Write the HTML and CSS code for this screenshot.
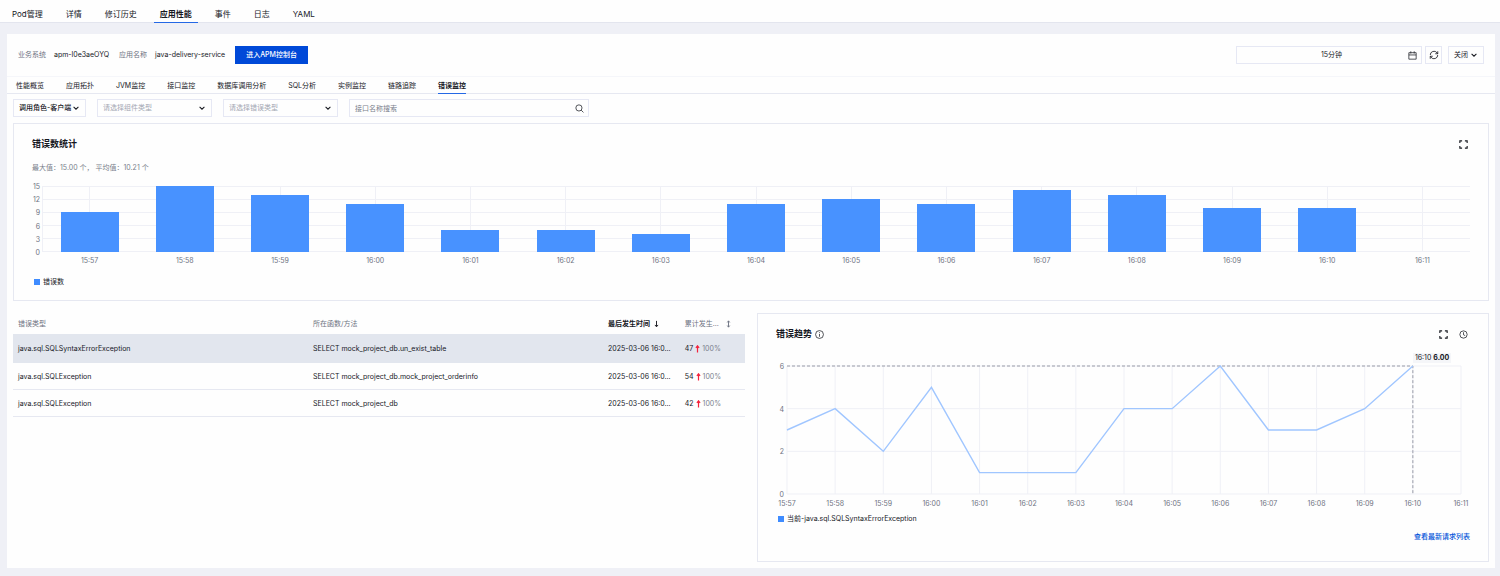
FILE: index.html
```html
<!DOCTYPE html>
<html lang="zh-CN">

<head>
    <meta charset="UTF-8">
    <meta name="viewport" content="width=device-width, initial-scale=1">
    <title>应用性能</title>
    <link rel="stylesheet" href="styles.css">
</head>

<body>
    <!-- Page tabs -->
    <nav class="page-tabs">
        <a href="#pod">Pod管理</a>
        <a href="#detail">详情</a>
        <a href="#history">修订历史</a>
        <a href="#apm" class="active">应用性能</a>
        <a href="#events">事件</a>
        <a href="#logs">日志</a>
        <a href="#yaml">YAML</a>
    </nav>

    <main class="panel">
        <!-- Service info and time range -->
        <div class="service-bar">
            <dl class="service-info">
                <dt>业务系统</dt>
                <dd>apm-l0e3aeOYQ</dd>
                <dt>应用名称</dt>
                <dd>java-delivery-service</dd>
            </dl>
            <button class="primary-button">进入APM控制台</button>
            <div class="time-tools">
                <button class="time-range">
                    <span>15分钟</span>
                    <svg class="icon" viewBox="0 0 16 16"><path d="M1.500 3h13v11.500h-13zM1.500 7h13M5 .5v4M11 .5v4" /></svg>
                </button>
                <button class="refresh" aria-label="刷新">
                    <svg class="icon" viewBox="0 0 16 16"><path d="M2 8a6 6 0 0 1 10.8-3.6L14 6M14 2v4h-4M14 8a6 6 0 0 1-10.8 3.6L2 10M2 14v-4h4" /></svg>
                </button>
                <div class="select auto-refresh">
                    <select aria-label="自动刷新"><option>关闭</option></select>
                    <svg class="chevron" viewBox="0 0 10 10"><path d="M1 3l4 4 4-4" /></svg>
                </div>
            </div>
        </div>

        <nav class="sub-tabs">
            <a href="#overview">性能概览</a>
            <a href="#topology">应用拓扑</a>
            <a href="#jvm">JVM监控</a>
            <a href="#api">接口监控</a>
            <a href="#db">数据库调用分析</a>
            <a href="#sql">SQL分析</a>
            <a href="#instance">实例监控</a>
            <a href="#trace">链路追踪</a>
            <a href="#error" class="active">错误监控</a>
        </nav>

        <div class="content">
            <!-- Filters -->
            <form class="filters">
                <div class="select role">
                    <select aria-label="调用角色"><option>调用角色-客户端</option></select>
                    <svg class="chevron" viewBox="0 0 10 10"><path d="M1 3l4 4 4-4" /></svg>
                </div>
                <div class="select empty">
                    <select aria-label="组件类型"><option>请选择组件类型</option></select>
                    <svg class="chevron" viewBox="0 0 10 10"><path d="M1 3l4 4 4-4" /></svg>
                </div>
                <div class="select empty">
                    <select aria-label="错误类型"><option>请选择错误类型</option></select>
                    <svg class="chevron" viewBox="0 0 10 10"><path d="M1 3l4 4 4-4" /></svg>
                </div>
                <div class="search">
                    <input type="text" aria-label="接口名称搜索" placeholder="接口名称搜索">
                    <button type="button" aria-label="搜索">
                        <svg class="icon" viewBox="0 0 16 16"><circle cx="7" cy="7" r="5.5" /><path d="M11 11l4 4" /></svg>
                    </button>
                </div>
            </form>

            <!-- Error count -->
            <section class="card count-card">
                <header class="card-header">
                    <h2>错误数统计</h2>
                    <div class="card-actions">
                        <button aria-label="全屏"><svg class="icon bold" viewBox="0 0 16 16"><path d="M1.5 5.5v-4h4M10.5 1.5h4v4M14.5 10.5v4h-4M5.5 14.5h-4v-4" /></svg></button>
                    </div>
                </header>
                <p class="summary">最大值：15.00 个， 平均值：10.21 个</p>
                <div class="chart">
                    <ul class="y-axis">
                        <li>15</li>
                        <li>12</li>
                        <li>9</li>
                        <li>6</li>
                        <li>3</li>
                        <li>0</li>
                    </ul>
                    <div class="bars">
                        <div class="col"><div class="bar" style="height: 60%"></div></div>
                        <div class="col"><div class="bar" style="height: 100%"></div></div>
                        <div class="col"><div class="bar" style="height: 86.67%"></div></div>
                        <div class="col"><div class="bar" style="height: 73.33%"></div></div>
                        <div class="col"><div class="bar" style="height: 33.33%"></div></div>
                        <div class="col"><div class="bar" style="height: 33.33%"></div></div>
                        <div class="col"><div class="bar" style="height: 26.67%"></div></div>
                        <div class="col"><div class="bar" style="height: 73.33%"></div></div>
                        <div class="col"><div class="bar" style="height: 80%"></div></div>
                        <div class="col"><div class="bar" style="height: 73.33%"></div></div>
                        <div class="col"><div class="bar" style="height: 93.33%"></div></div>
                        <div class="col"><div class="bar" style="height: 86.67%"></div></div>
                        <div class="col"><div class="bar" style="height: 66.67%"></div></div>
                        <div class="col"><div class="bar" style="height: 66.67%"></div></div>
                        <div class="col"></div>
                    </div>
                    <ul class="x-axis">
                        <li>15:57</li>
                        <li>15:58</li>
                        <li>15:59</li>
                        <li>16:00</li>
                        <li>16:01</li>
                        <li>16:02</li>
                        <li>16:03</li>
                        <li>16:04</li>
                        <li>16:05</li>
                        <li>16:06</li>
                        <li>16:07</li>
                        <li>16:08</li>
                        <li>16:09</li>
                        <li>16:10</li>
                        <li>16:11</li>
                    </ul>
                </div>
                <div class="legend"><i></i>错误数</div>
            </section>

            <div class="split">
                <!-- Error list -->
                <table class="errors">
                    <thead>
                        <tr>
                            <th class="wide">错误类型</th>
                            <th class="wide">所在函数/方法</th>
                            <th class="time"><button class="sort active">最后发生时间 <svg class="sort-icon" viewBox="0 0 8 12"><path d="M4 1v9M1.5 7.5L4 10.5l2.500-3" /></svg></button></th>
                            <th><button class="sort total">累计发生... <svg class="sort-icon" viewBox="0 0 8 12"><path d="M4 1v10M2 3.500L4 1l2 2.500M2 8.500L4 11l2-2.500" /></svg></button></th>
                        </tr>
                    </thead>
                    <tbody>
                        <tr class="selected">
                            <td>java.sql.SQLSyntaxErrorException</td>
                            <td>SELECT mock_project_db.un_exist_table</td>
                            <td>2025-03-06 16:0...</td>
                            <td>47 <svg class="up" viewBox="0 0 6 10"><path d="M3 9.500V2M1 3.500l2-2.500 2 2.500" /></svg> <span class="rate">100%</span></td>
                        </tr>
                        <tr>
                            <td>java.sql.SQLException</td>
                            <td>SELECT mock_project_db.mock_project_orderinfo</td>
                            <td>2025-03-06 16:0...</td>
                            <td>54 <svg class="up" viewBox="0 0 6 10"><path d="M3 9.500V2M1 3.500l2-2.500 2 2.500" /></svg> <span class="rate">100%</span></td>
                        </tr>
                        <tr>
                            <td>java.sql.SQLException</td>
                            <td>SELECT mock_project_db</td>
                            <td>2025-03-06 16:0...</td>
                            <td>42 <svg class="up" viewBox="0 0 6 10"><path d="M3 9.500V2M1 3.500l2-2.500 2 2.500" /></svg> <span class="rate">100%</span></td>
                        </tr>
                    </tbody>
                </table>

                <!-- Error trend -->
                <section class="card trend-card">
                    <header class="card-header">
                        <h2>错误趋势</h2>
                        <svg class="icon info" viewBox="0 0 16 16"><circle cx="8" cy="8" r="7" /><path d="M8 7v5M8 4v1.500" /></svg>
                        <div class="card-actions">
                            <button aria-label="全屏"><svg class="icon bold" viewBox="0 0 16 16"><path d="M1.5 5.5v-4h4M10.5 1.5h4v4M14.5 10.5v4h-4M5.5 14.5h-4v-4" /></svg></button>
                            <button aria-label="历史"><svg class="icon" viewBox="0 0 16 16"><circle cx="8" cy="8" r="6.500" /><path d="M8 4v4.500l3 1.500" /></svg></button>
                        </div>
                    </header>
                    <div class="chart">
                        <ul class="y-axis">
                            <li>6</li>
                            <li>4</li>
                            <li>2</li>
                            <li>0</li>
                        </ul>
                        <div class="plot">
                            <svg class="lines" viewBox="0 0 14 6" preserveAspectRatio="none">
                                <path class="grid" d="M0 0H14M0 2H14M0 4H14M0 6H14M0 0V6M1 0V6M2 0V6M3 0V6M4 0V6M5 0V6M6 0V6M7 0V6M8 0V6M9 0V6M10 0V6M11 0V6M12 0V6M13 0V6M14 0V6" />
                                <path class="cursor" d="M0 0H13V6" />
                                <polyline class="series" points="0,3 1,2 2,4 3,1 4,5 5,5 6,5 7,2 8,2 9,0 10,3 11,3 12,2 13,0" />
                            </svg>
                            <div class="tooltip">16:10 <b>6.00</b></div>
                        </div>
                        <ul class="x-axis">
                            <li>15:57</li>
                            <li>15:58</li>
                            <li>15:59</li>
                            <li>16:00</li>
                            <li>16:01</li>
                            <li>16:02</li>
                            <li>16:03</li>
                            <li>16:04</li>
                            <li>16:05</li>
                            <li>16:06</li>
                            <li>16:07</li>
                            <li>16:08</li>
                            <li>16:09</li>
                            <li>16:10</li>
                            <li>16:11</li>
                        </ul>
                    </div>
                    <div class="legend"><i></i>当前-java.sql.SQLSyntaxErrorException</div>
                    <a class="more" href="#requests">查看最新请求列表</a>
                </section>
            </div>
        </div>
    </main>
</body>

</html>
```

FILE: styles.css
```css
* {
    box-sizing: border-box;
}

body {
    margin: 0;
    min-height: 100vh;
    background-color: #eff0f6;
    color: #16181f;
    font-family: Inter, "Noto Sans CJK SC", sans-serif;
    font-size: 7px;
    line-height: 10px;
}

a {
    color: inherit;
    text-decoration: none;
}

ul,
dl,
dd,
p,
h2 {
    margin: 0;
    padding: 0;
    list-style: none;
}

button,
input,
select {
    margin: 0;
    padding: 0;
    border: none;
    border-radius: 0;
    background: none;
    color: inherit;
    font: inherit;
    outline: none;
}

button {
    cursor: pointer;
}

svg {
    display: block;
    fill: none;
    stroke: currentColor;
}

.icon {
    width: 9px;
    height: 9px;
    stroke-width: 1.3;
}

.icon.bold {
    stroke-width: 2;
}

/* page tabs */
.page-tabs {
    display: flex;
    gap: 11px;
    height: 23px;
    padding: 0 6px;
    background-color: #fefefe;
    border-bottom: 1px solid #e3e5ee;
    font-size: 8px;
    line-height: 12px;
}

.page-tabs a {
    height: 23px;
    padding: 8px 6px 0;
}

.page-tabs .active {
    border-bottom: 1px solid #2468e5;
    font-weight: 600;
}

.panel {
    margin: 11px 5px 8px 7px;
    background-color: #fefefe;
}

/* service bar */
.service-bar {
    display: flex;
    align-items: center;
    height: 43px;
    padding: 0 11px;
    border-bottom: 1px solid #f5f6fa;
}

.service-info {
    display: flex;
}

.service-info dt {
    margin-right: 8px;
    color: #6e7382;
}

.service-info dd {
    margin-right: 10px;
}

.primary-button {
    height: 18px;
    padding: 0 11px;
    background-color: #0049d8;
    color: #fff;
    font-weight: 500;
}

.time-tools {
    display: flex;
    gap: 3px;
    margin-left: auto;
}

.time-range,
.refresh,
.select,
.search {
    height: 18px;
    border: 1px solid #e6e8f4;
}

.time-range {
    display: flex;
    align-items: center;
    width: 186px;
    padding: 0 4px 0 18px;
}

.time-range span {
    flex: 1;
}

.refresh {
    display: flex;
    align-items: center;
    justify-content: center;
    width: 17px;
}

.refresh .icon {
    width: 10px;
    height: 10px;
}

.auto-refresh {
    width: 36px;
    margin-left: 3px;
}

.select {
    display: grid;
    align-items: center;
}

.select select,
.select .chevron {
    grid-area: 1 / 1;
}

.select select {
    appearance: none;
    width: 100%;
    height: 16px;
    padding: 0 5px;
}

.chevron {
    justify-self: end;
    width: 6px;
    height: 6px;
    margin-right: 6px;
    stroke-width: 1.7;
    pointer-events: none;
}

/* sub tabs */
.sub-tabs {
    display: flex;
    gap: 22px;
    height: 17px;
    padding: 0 9px;
    border-bottom: 1px solid #e6e8f1;
}

.sub-tabs a {
    height: 17px;
    padding-top: 4px;
}

.sub-tabs .active {
    border-bottom: 1px solid #2468e5;
    font-weight: 600;
}

.content {
    padding: 5px 6px 6px;
}

/* filters */
.filters {
    display: flex;
    gap: 11px;
    margin-bottom: 6px;
}

.filters .select {
    width: 115px;
}

.filters .role {
    width: 73px;
    font-weight: 500;
}

.filters .empty select {
    color: #a3a7b3;
}

.search {
    display: flex;
    align-items: center;
    width: 240px;
    padding: 0 4px 0 5px;
}

.search input {
    flex: 1;
    min-width: 0;
    height: 16px;
}

.search input::placeholder {
    color: #7a7f8c;
    opacity: 1;
}

/* cards */
.card {
    padding: 14px 18px 13px;
    border: 1px solid #e6e8f1;
}

.card-header {
    display: flex;
    align-items: center;
    height: 12px;
}

.card-header h2 {
    font-size: 9px;
    line-height: 12px;
    font-weight: 700;
}

.card-header .info {
    margin-left: 3px;
}

.card-actions {
    display: flex;
    gap: 11px;
    margin-left: auto;
    padding-right: 2px;
}

.summary {
    margin: 13px 0;
    color: #7a7f8c;
}

/* charts */
.chart {
    display: grid;
    grid-template-columns: 8px 1fr;
    column-gap: 3px;
    color: #6e7382;
}

.y-axis {
    display: flex;
    flex-direction: column;
    justify-content: space-between;
    text-align: right;
}

.y-axis li {
    height: 0;
    line-height: 1px;
}

.x-axis {
    grid-column: 2;
    display: flex;
    text-align: center;
}

.count-card .chart {
    column-gap: 2px;
}

.bars {
    display: flex;
    height: 66px;
    background: repeating-linear-gradient(to bottom, #eff0f6 0 1px, transparent 1px 13px);
    box-shadow: inset 1px 0 #eff0f6;
}

.col {
    flex: 1;
    display: flex;
    align-items: flex-end;
    justify-content: center;
    background: linear-gradient(#eff0f6, #eff0f6) center / 1px 100% no-repeat;
}

.bar {
    width: 61%;
    background-color: #4892ff;
}

.count-card .x-axis {
    margin-top: 4px;
}

.count-card .x-axis li {
    flex: 1;
}

.legend {
    display: flex;
    align-items: center;
    gap: 3px;
    padding-left: 2px;
}

.legend i {
    width: 6px;
    height: 6px;
    background-color: #3f8cff;
}

.count-card .legend {
    margin-top: 11px;
}

.split {
    display: grid;
    grid-template-columns: 1fr 1fr;
    align-items: start;
    gap: 12px;
    margin-top: 12px;
}

/* error list */
.errors {
    width: 100%;
    table-layout: fixed;
    border-collapse: collapse;
}

.errors th,
.errors td {
    padding: 0 0 0 5px;
    text-align: left;
    white-space: nowrap;
}

.errors th {
    height: 21px;
    color: #6e7382;
    font-weight: 400;
}

.errors .wide {
    width: 40.3%;
}

.errors .time {
    width: 10.5%;
}

.errors td {
    height: 27px;
    padding-top: 2px;
    border-bottom: 1px solid #e6e8f1;
}

.errors .selected td {
    height: 28px;
    background-color: #e2e6ee;
    border-color: #e2e6ee;
}

.sort {
    display: flex;
    align-items: center;
    gap: 4px;
}

.sort.active {
    color: #16181f;
    font-weight: 600;
}

.sort.total {
    gap: 7px;
}

.sort-icon {
    width: 5px;
    height: 8px;
    stroke-width: 1.5;
}

.up {
    display: inline-block;
    width: 5px;
    height: 8px;
    color: #f5223c;
    stroke-width: 1.5;
    vertical-align: middle;
}

.rate {
    color: #7a7f8c;
}

/* error trend */
.trend-card {
    padding-bottom: 19px;
}

.trend-card .chart {
    margin-top: 26px;
    padding-right: 9px;
}

.plot {
    position: relative;
    height: 128px;
}

.lines {
    width: 100%;
    height: 100%;
    overflow: visible;
}

.lines path,
.lines polyline {
    vector-effect: non-scaling-stroke;
}

.grid {
    stroke: #eff0f6;
}

.cursor {
    stroke: #9a9ca8;
    stroke-dasharray: 3 2;
}

.series {
    stroke: #a0c6ff;
    stroke-width: 1.4;
}

.tooltip {
    position: absolute;
    bottom: 100%;
    left: 92.86%;
    margin-bottom: 3px;
    padding: 0 2px;
    background-color: #f5f6f9;
    color: #16181f;
    white-space: nowrap;
}

.trend-card .x-axis {
    justify-content: space-between;
    margin-top: 5px;
}

.trend-card .x-axis li {
    display: flex;
    justify-content: center;
    width: 0;
}

.trend-card .legend {
    margin-top: 5px;
}

.more {
    display: block;
    width: fit-content;
    margin: 8px 0 0 auto;
    color: #0052d9;
    font-weight: 500;
}
```
